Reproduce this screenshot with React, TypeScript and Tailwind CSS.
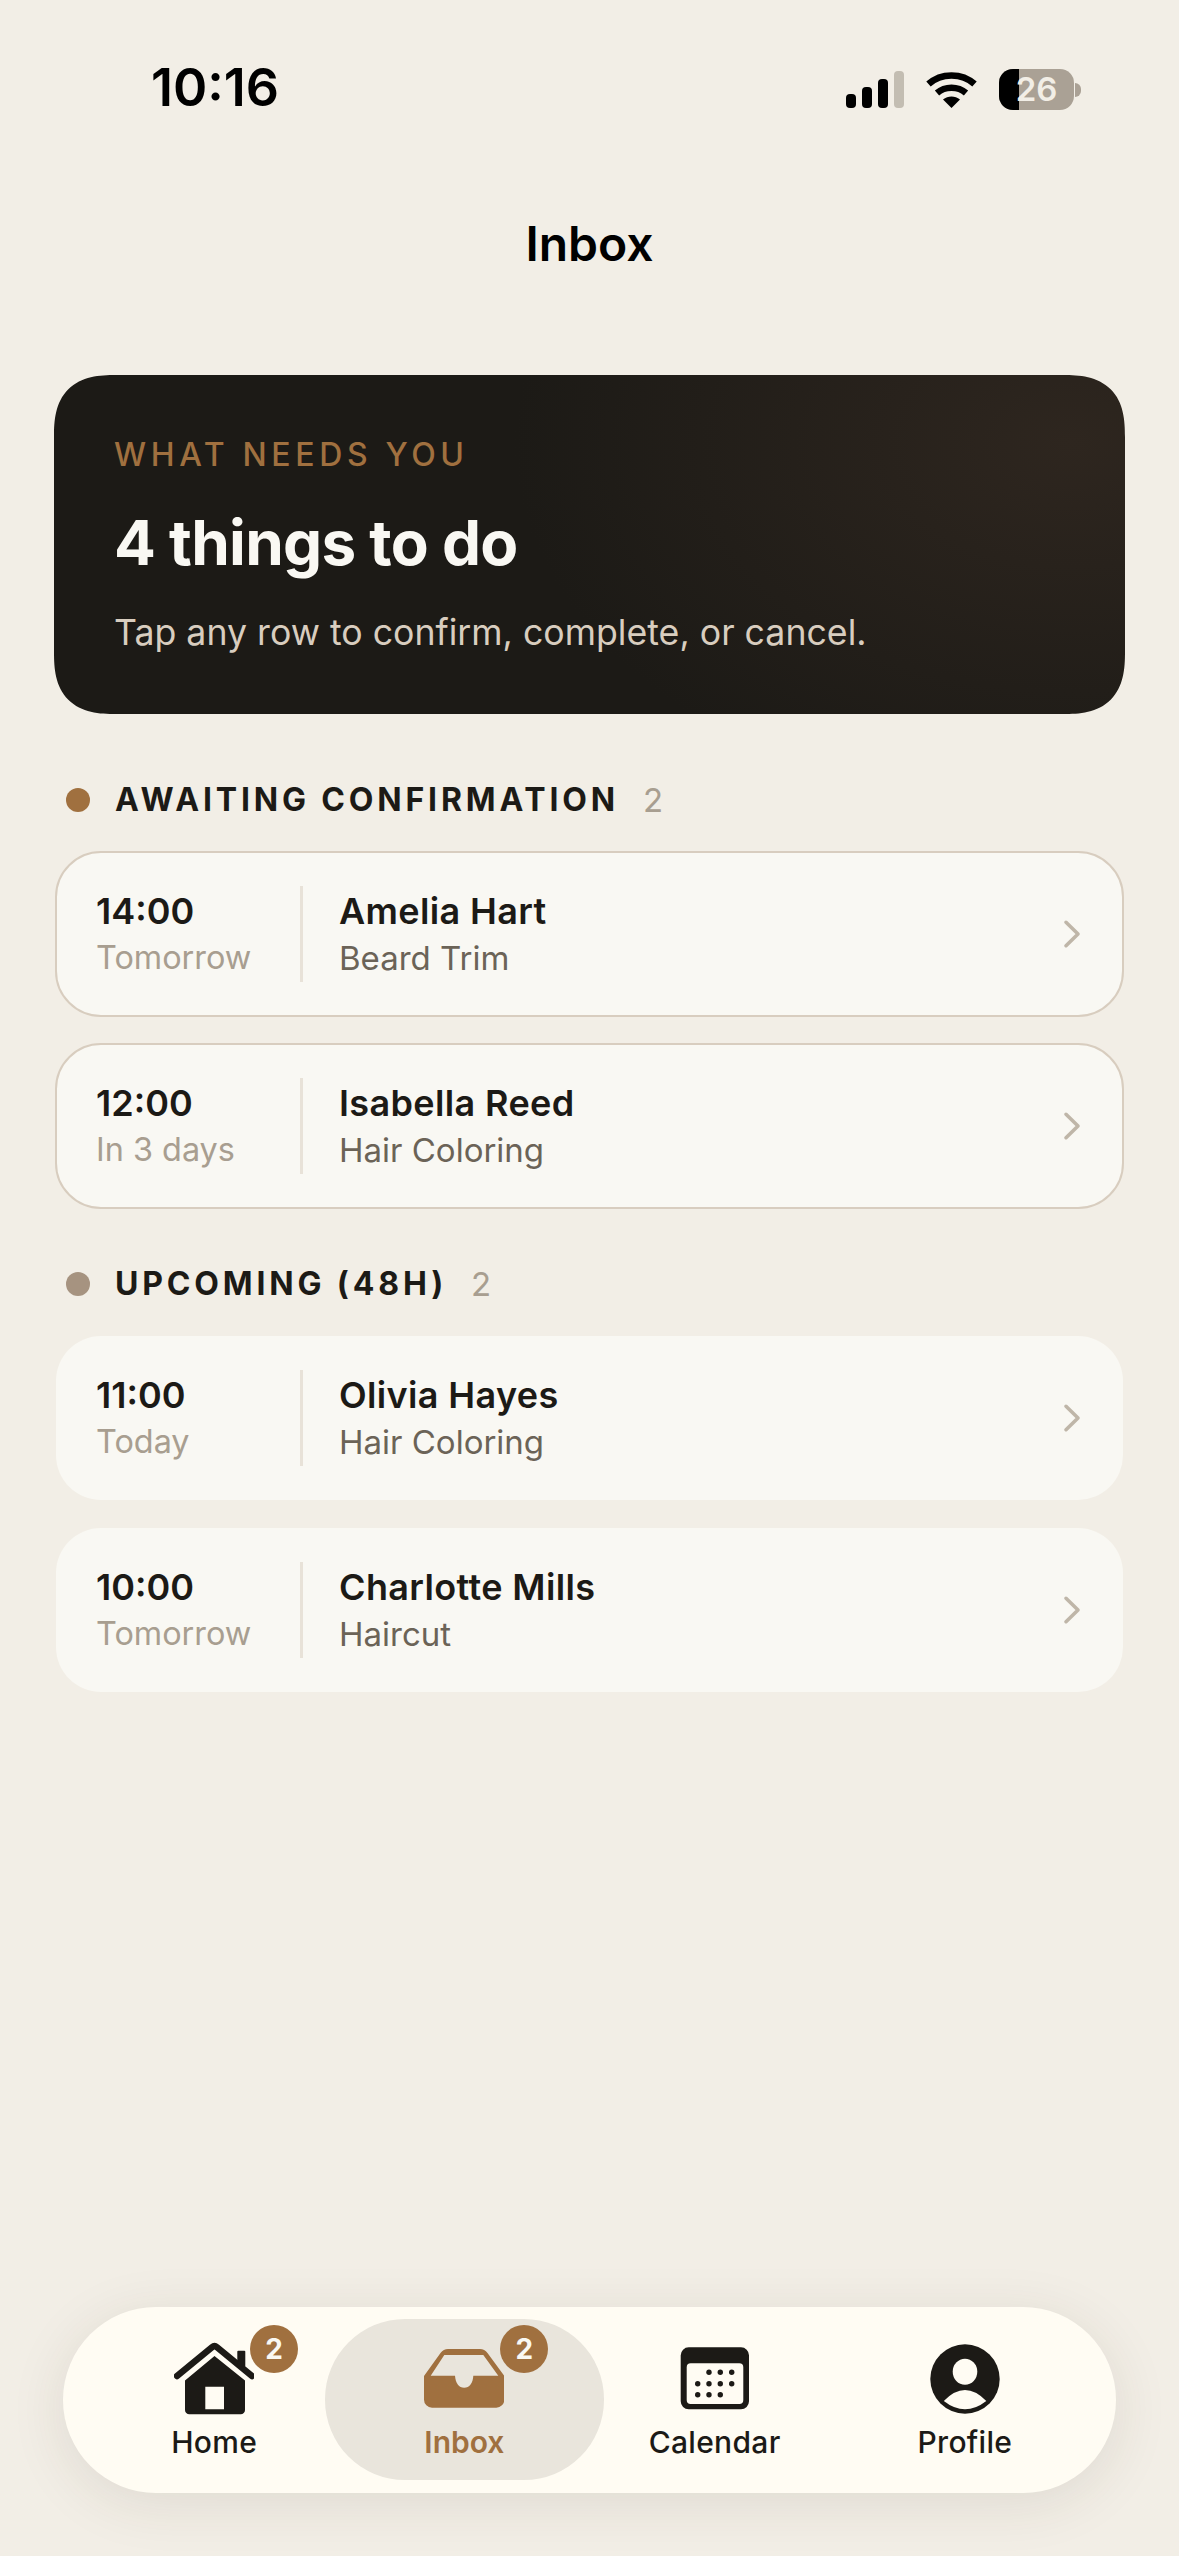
import React from "react";

type Item = { time: string; when: string; name: string; service: string };

const awaiting: Item[] = [
  { time: "14:00", when: "Tomorrow", name: "Amelia Hart", service: "Beard Trim" },
  { time: "12:00", when: "In 3 days", name: "Isabella Reed", service: "Hair Coloring" },
];
const upcoming: Item[] = [
  { time: "11:00", when: "Today", name: "Olivia Hayes", service: "Hair Coloring" },
  { time: "10:00", when: "Tomorrow", name: "Charlotte Mills", service: "Haircut" },
];

function Row({ item, bordered }: { item: Item; bordered: boolean }) {
  return (
    <div
      className={
        bordered
          ? "flex items-center h-[166px] rounded-[46px] bg-[#f9f8f3] border-2 border-[#d8cdbf] pl-[39px] pr-[38px]"
          : "flex items-center h-[166px] rounded-[46px] bg-[#f9f8f3] bg-clip-padding border border-transparent pl-[40px] pr-[39px]"
      }
    >
      <div className="w-[204px] shrink-0 flex flex-col pt-[2px]">
        <span className="text-[36px] leading-[46px] font-semibold text-[#1c1a16]">{item.time}</span>
        <span className="text-[32.4px] leading-[48px] text-[#a89e90]">{item.when}</span>
      </div>
      <div className="w-[3px] h-[96px] bg-[#e8e2d8] shrink-0" />
      <div className="flex-1 flex flex-col pl-[36px] pt-[2px]">
        <span className="text-[36px] leading-[46px] font-semibold tracking-[0.01em] text-[#1c1a16]">{item.name}</span>
        <span className="text-[33px] leading-[48px] text-[#6b6357]">{item.service}</span>
      </div>
      <svg width="24" height="36" viewBox="0 0 24 36" fill="none" className="shrink-0">
        <path d="M6 6.3 L18 18 L6 29.7" stroke="#bfb6a8" strokeWidth="3.6" strokeLinecap="round" strokeLinejoin="round" />
      </svg>
    </div>
  );
}

function SectionHead({ label, count, dot, className }: { label: string; count: number; dot: string; className: string }) {
  return (
    <div className={className}>
      <span className={dot} />
      <span className="ml-[25px] text-[32px] leading-[40px] font-bold tracking-[0.12em] text-[#1c1a16]">{label}</span>
      <span className="ml-[24px] text-[33px] leading-[40px] text-[#a89e90]">{count}</span>
    </div>
  );
}

function Badge() {
  return (
    <span className="absolute left-[76px] -top-[15px] w-[48px] h-[48px] rounded-full bg-[#a0703f] flex items-center justify-center text-[28px] font-bold text-[#f9f8f3]">
      2
    </span>
  );
}

function HomeIcon() {
  return (
    <svg width="80" height="80" viewBox="14 10 80 80" className="text-[#1c1a16]">
      <path d="M17 46 L52 17.2 Q54.5 15.2 57 17.2 L92 46" fill="none" stroke="currentColor" strokeWidth="6.5" strokeLinecap="round" strokeLinejoin="round" />
      <rect x="77.3" y="20.7" width="8" height="16" rx="1" fill="currentColor" />
      <path d="M54.5 26 L85 50.5 V80 a4.3 4.3 0 0 1 -4.3 4.3 H29.3 a4.3 4.3 0 0 1 -4.3 -4.3 V50.5 Z M45.3 56.7 V79.3 H64 V56.7 Z" fill="currentColor" fillRule="evenodd" />
    </svg>
  );
}

function TrayIcon() {
  return (
    <svg width="80" height="80" viewBox="14 10 80 80" className="text-[#a0703f]">
      <path
        fillRule="evenodd"
        fill="currentColor"
        d="M14 46 L30.5 23 Q33.5 19 38 19 H70 Q74.5 19 77.5 23 L94.3 46 V69.7 a8 8 0 0 1 -8 8 H22 a8 8 0 0 1 -8 -8 Z M20.7 45.7 H45 C45.5 53 49 57.7 54.2 57.7 C59.4 57.7 63 53 63.3 45.7 H88.3 L73.3 25 H34.3 Z"
      />
    </svg>
  );
}

function CalendarIcon() {
  const dots = [
    [49, 42.3],
    [60.3, 42.3],
    [71.7, 42.3],
    [37.7, 53.7],
    [49, 53.7],
    [60.3, 53.7],
    [71.7, 53.7],
    [37.7, 64.7],
    [49, 64.7],
    [60.3, 64.7],
  ];
  return (
    <svg width="80" height="80" viewBox="15 10 80 80" className="text-[#1c1a16]">
      <path
        fillRule="evenodd"
        fill="currentColor"
        d="M28.7 17.3 H81 a8 8 0 0 1 8 8 V71.3 a8 8 0 0 1 -8 8 H28.7 a8 8 0 0 1 -8 -8 V25.3 a8 8 0 0 1 8 -8 Z M30.7 33.3 a4 4 0 0 0 -4 4 V70 a4 4 0 0 0 4 4 H79.3 a4 4 0 0 0 4 -4 V37.3 a4 4 0 0 0 -4 -4 Z"
      />
      {dots.map(([x, y]) => (
        <circle key={`${x}-${y}`} cx={x} cy={y} r="2.7" fill="currentColor" />
      ))}
    </svg>
  );
}

function ProfileIcon() {
  return (
    <svg width="80" height="80" viewBox="25.7 10 80 80" className="text-[#1c1a16]">
      <circle cx="65.7" cy="49" r="34.7" fill="currentColor" />
      <ellipse cx="65.7" cy="41.7" rx="12.3" ry="13" fill="#fffcf3" />
      <path d="M44.5 71 Q65.7 49 87 71 Q65.7 87.6 44.5 71 Z" fill="#fffcf3" />
    </svg>
  );
}

export default function App() {
  return (
    <div className="w-[1179px] h-[2556px] bg-[#f2eee6] flex flex-col relative overflow-hidden font-['Inter',sans-serif]">
      {/* status bar */}
      <div className="h-[175px] flex items-start justify-between pt-[59px] pl-[151px] pr-[98px]">
        <span className="text-[52px] leading-[58px] font-semibold text-black">10:16</span>
        <div className="flex items-center gap-[22px] pt-[10px]">
          <svg width="58" height="38" viewBox="0 0 58 38">
            <rect x="0" y="23" width="10" height="14" rx="4" fill="#000" />
            <rect x="16" y="16" width="10" height="21" rx="4" fill="#000" />
            <rect x="32" y="8" width="10" height="29" rx="4" fill="#000" />
            <rect x="48" y="0" width="10" height="37" rx="4" fill="#c3bdb2" />
          </svg>
          <svg width="51" height="38" viewBox="0 0 51 38" fill="none">
            <path d="M2.5 13 C15 1.5 36 1.5 48.5 13" stroke="#000" strokeWidth="6.5" />
            <path d="M11 22 C19 15 32 15 40 22" stroke="#000" strokeWidth="6.5" />
            <path d="M25.5 37 L17 28.5 C22 24.5 29 24.5 34 28.5 Z" fill="#000" />
          </svg>
          <div className="flex items-center">
            <div className="relative w-[75px] h-[41px] rounded-[14px] bg-[#aaa195] overflow-hidden flex items-center justify-center">
              <span className="absolute left-0 top-0 bottom-0 w-[20px] bg-black" />
              <span className="relative text-[33px] leading-[41px] font-semibold text-[#f2eee6]">26</span>
            </div>
            <span className="w-[6px] h-[14px] rounded-r-full bg-[#aaa195] ml-[1px]" />
          </div>
        </div>
      </div>

      {/* title */}
      <div className="h-[64px] mt-[37px] flex items-center justify-center">
        <h1 className="text-[48px] leading-[64px] font-semibold text-black">Inbox</h1>
      </div>

      {/* main */}
      <div className="px-[55px] mt-[99px] flex flex-col">
        <div className="-mx-px h-[339px] rounded-[62px] [corner-shape:superellipse(1.4)] bg-[#1c1a16] bg-[radial-gradient(ellipse_52%_110%_at_95%_20%,#2e261f_0%,#1c1a16_100%)] pl-[60px] pr-[40px] pt-[60px] flex flex-col">
          <span className="text-[32px] leading-[40px] font-medium tracking-[0.145em] text-[#a0703f]">WHAT NEEDS YOU</span>
          <span className="mt-[32px] text-[62px] leading-[72px] font-bold tracking-[-0.012em] text-[#f9f8f3]">4 things to do</span>
          <span className="mt-[31px] text-[35.7px] leading-[44px] text-[#d8cdbf]">Tap any row to confirm, complete, or cancel.</span>
        </div>

        <SectionHead
          label="AWAITING CONFIRMATION"
          count={2}
          dot="w-[24px] h-[24px] rounded-full bg-[#a0703f] ml-[11px] shrink-0"
          className="flex items-center h-[40px] mt-[66px]"
        />
        <div className="flex flex-col gap-[26px] mt-[31px]">
          {awaiting.map((it) => (
            <Row key={it.name} item={it} bordered />
          ))}
        </div>

        <SectionHead
          label="UPCOMING (48H)"
          count={2}
          dot="w-[24px] h-[24px] rounded-full bg-[#a69380] ml-[11px] shrink-0"
          className="flex items-center h-[40px] mt-[55px]"
        />
        <div className="flex flex-col gap-[26px] mt-[31px]">
          {upcoming.map((it) => (
            <Row key={it.name} item={it} bordered={false} />
          ))}
        </div>
      </div>

      {/* tab bar */}
      <nav className="absolute left-[63px] top-[2307px] w-[1053px] h-[186px] rounded-[93px] bg-[#fffcf3] shadow-[0_10px_56px_rgba(60,45,25,0.10)] grid grid-cols-4 px-[26px]">
        <div className="flex flex-col items-center pt-[33px]">
          <div className="relative w-[80px] h-[80px]">
            <HomeIcon />
            <Badge />
          </div>
          <span className="mt-[4px] text-[30px] leading-[36px] font-medium tracking-[0.01em] text-[#1c1a16]">Home</span>
        </div>
        <div className="-mx-[14px] mt-[12px] h-[161px] rounded-[80px] bg-[#e9e5dc] flex flex-col items-center pt-[21px]">
          <div className="relative w-[80px] h-[80px]">
            <TrayIcon />
            <Badge />
          </div>
          <span className="mt-[4px] text-[30px] leading-[36px] font-semibold text-[#a0703f]">Inbox</span>
        </div>
        <div className="flex flex-col items-center pt-[33px]">
          <div className="w-[80px] h-[80px]">
            <CalendarIcon />
          </div>
          <span className="mt-[4px] text-[30px] leading-[36px] font-medium tracking-[0.01em] text-[#1c1a16]">Calendar</span>
        </div>
        <div className="flex flex-col items-center pt-[33px]">
          <div className="w-[80px] h-[80px]">
            <ProfileIcon />
          </div>
          <span className="mt-[4px] text-[30px] leading-[36px] font-medium tracking-[0.01em] text-[#1c1a16]">Profile</span>
        </div>
      </nav>
    </div>
  );
}
